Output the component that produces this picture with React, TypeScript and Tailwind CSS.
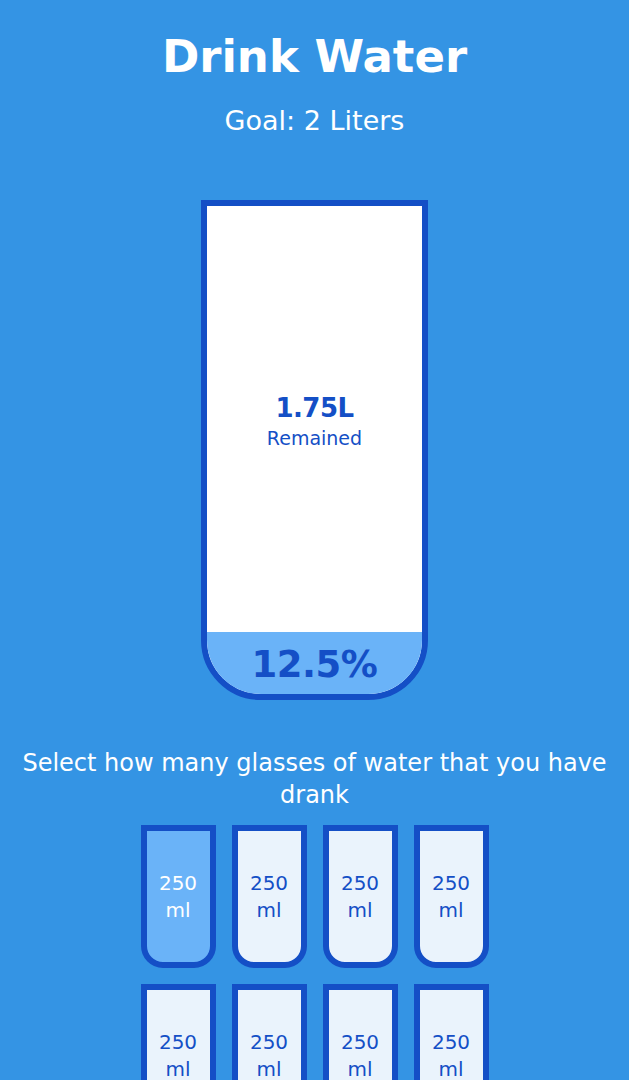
import React from "react";

export default function App() {
  const cups = Array.from({ length: 8 }, (_, i) => i);
  return (
    <div className="min-h-screen w-full bg-[#3494e4] text-white font-['DejaVu_Sans',sans-serif] flex flex-col items-center">
      <h1 className="mt-[28px] text-[45px] font-bold leading-[58px]">Drink Water</h1>
      <h3 className="mt-[18px] text-[27px] font-normal leading-[34px]">Goal: 2 Liters</h3>
      <div className="mt-[62px] w-[227px] h-[500px] bg-white border-[6px] border-[#144fc6] rounded-b-[60px] overflow-hidden flex flex-col text-[#144fc6]">
        <div className="flex-1 flex flex-col items-center justify-center text-center">
          <span className="text-[26px] font-bold leading-[37px] tracking-[-0.5px]">1.75L</span>
          <small className="text-[19px] leading-[22px]">Remained</small>
        </div>
        <div className="h-[62px] pt-[3px] bg-[#6ab3f8] flex items-center justify-center text-[37px] font-bold leading-none tracking-[-0.5px]">
          12.5%
        </div>
      </div>
      <p className="mt-[47px] text-[24px] leading-[32px] text-center">
        Select how many glasses of water that you have
        <br />
        drank
      </p>
      <div className="mt-[14px] grid grid-cols-4 gap-[16px] pb-[60px]">
        {cups.map((i) => (
          <div
            key={i}
            className={
              i === 0
                ? "w-[75px] h-[143px] border-[6px] border-[#144fc6] rounded-b-[22px] bg-[#6ab3f8] text-white flex flex-col items-center justify-center text-center text-[20px] leading-[27px]"
                : "w-[75px] h-[143px] border-[6px] border-[#144fc6] rounded-b-[22px] bg-[#eaf3fc] text-[#144fc6] flex flex-col items-center justify-center text-center text-[20px] leading-[27px]"
            }
          >
            <span>250</span>
            <span>ml</span>
          </div>
        ))}
      </div>
    </div>
  );
}
